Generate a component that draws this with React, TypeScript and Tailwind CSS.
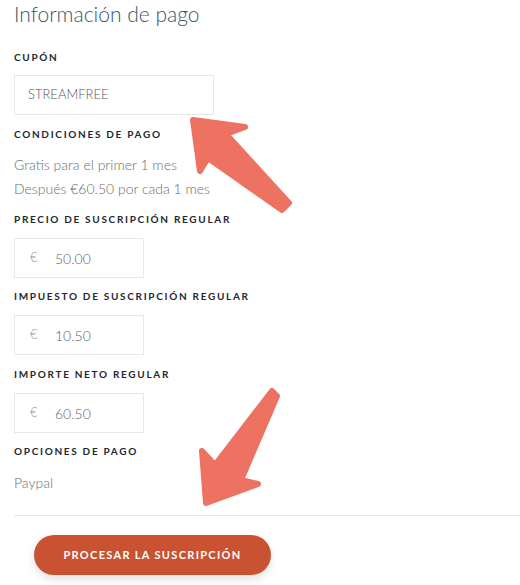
import React from 'react';

const font = { fontFamily: 'Lato, "Open Sans", sans-serif' };

const Label: React.FC<{ children: React.ReactNode; className?: string }> = ({ children, className = '' }) => (
  <div className={`text-[10px] leading-[14px] font-bold tracking-[0.17em] text-[#1c2733] uppercase ${className}`}>
    {children}
  </div>
);

const MoneyBox: React.FC<{ value: string }> = ({ value }) => (
  <div className="mt-[12px] flex h-[40px] w-[130px] items-center border border-[#e8e8e8] bg-white pl-[15px] text-[14px] font-light text-[#5f5f5f]">
    <span className="w-[25px] text-[13px] text-[#999]">€</span>
    <span>{value}</span>
  </div>
);

const App: React.FC = () => {
  return (
    <div className="relative h-[585px] w-[520px] overflow-hidden bg-white" style={font}>
      <div className="pl-[14px]">
        <h1 className="text-[21px] leading-[28px] font-light text-[#3d5566]">Información de pago</h1>

        <Label className="mt-[22px]">Cupón</Label>
        <div className="mt-[11px] flex h-[40px] w-[200px] items-center border border-[#e8e8e8] pl-[13px] text-[13px] font-light text-[#555]">
          STREAMFREE
        </div>

        <Label className="mt-[12px]">Condiciones de pago</Label>
        <div className="mt-[12px] text-[14px] leading-[24px] font-light text-[#6b6b6b]">
          <p>Gratis para el primer 1 mes</p>
          <p>Después €60.50 por cada 1 mes</p>
        </div>

        <Label className="mt-[11px]">Precio de suscripción regular</Label>
        <MoneyBox value="50.00" />

        <Label className="mt-[11px]">Impuesto de suscripción regular</Label>
        <MoneyBox value="10.50" />

        <Label className="mt-[12px]">Importe neto regular</Label>
        <MoneyBox value="60.50" />

        <Label className="mt-[11px]">Opciones de pago</Label>
        <p className="mt-[13px] text-[14px] leading-[24px] font-light text-[#6b6b6b]">Paypal</p>

        <div className="mt-[20px] border-t border-[#e6e6e6]" />

        <div className="mt-[19px] pl-[20px]">
          <button className="h-[40px] w-[237px] rounded-full bg-[#c85232] text-[11px] font-bold tracking-[0.12em] text-white shadow-[0_4px_10px_rgba(0,0,0,0.12)]">
            PROCESAR LA SUSCRIPCIÓN
          </button>
        </div>
      </div>

      {/* flechas de anotación */}
      <svg className="pointer-events-none absolute left-0 top-0" width="520" height="585">
        <polygon
          points="193,120 245,127 226,134 289,203 282,210 208,158 200,171"
          fill="#ee7261"
          stroke="#ee7261"
          strokeWidth="6"
          strokeLinejoin="round"
        />
        <polygon
          points="272,391 277,396 241,480 258,484 206,503 202,451 215,465"
          fill="#ee7261"
          stroke="#ee7261"
          strokeWidth="6"
          strokeLinejoin="round"
        />
      </svg>
    </div>
  );
};

export default App;
